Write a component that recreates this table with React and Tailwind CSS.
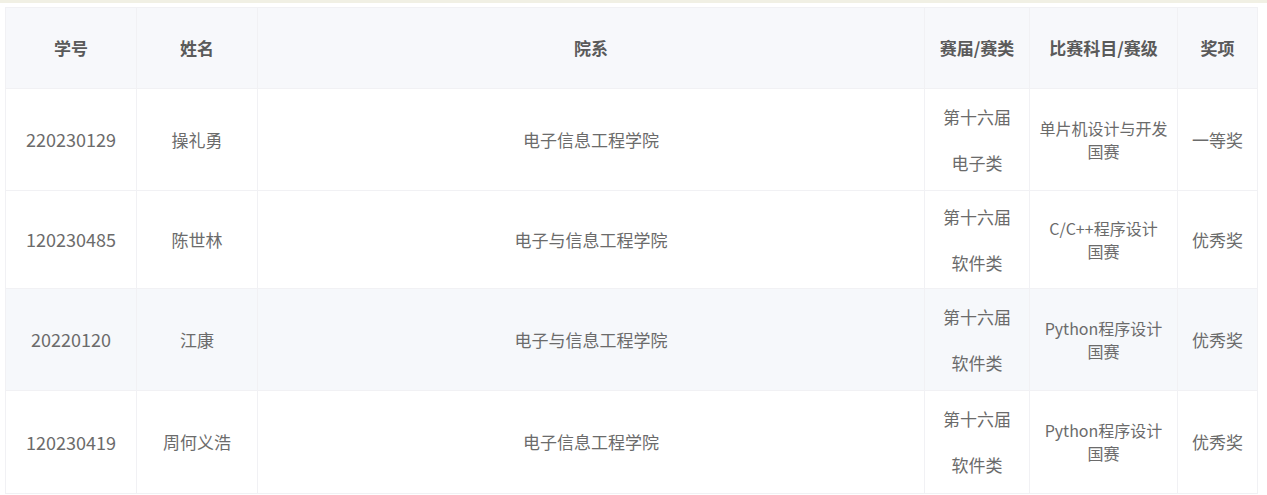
import React from "react";

const columns = [
  { key: "id", label: "学号", width: "w-[131px]" },
  { key: "name", label: "姓名", width: "w-[121px]" },
  { key: "dept", label: "院系", width: "w-[667px]" },
  { key: "session", label: "赛届/赛类", width: "w-[105px]" },
  { key: "subject", label: "比赛科目/赛级", width: "w-[148px]" },
  { key: "prize", label: "奖项", width: "w-[80px]" },
];

const rows = [
  {
    id: "220230129",
    name: "操礼勇",
    dept: "电子信息工程学院",
    session: ["第十六届", "电子类"],
    subject: ["单片机设计与开发", "国赛"],
    prize: "一等奖",
    height: "h-[102px]",
    bg: "bg-white",
  },
  {
    id: "120230485",
    name: "陈世林",
    dept: "电子与信息工程学院",
    session: ["第十六届", "软件类"],
    subject: ["C/C++程序设计", "国赛"],
    prize: "优秀奖",
    height: "h-[98px]",
    bg: "bg-white",
  },
  {
    id: "20220120",
    name: "江康",
    dept: "电子与信息工程学院",
    session: ["第十六届", "软件类"],
    subject: ["Python程序设计", "国赛"],
    prize: "优秀奖",
    height: "h-[102px]",
    bg: "bg-[#f6f8fb]",
  },
  {
    id: "120230419",
    name: "周何义浩",
    dept: "电子信息工程学院",
    session: ["第十六届", "软件类"],
    subject: ["Python程序设计", "国赛"],
    prize: "优秀奖",
    height: "h-[103px]",
    bg: "bg-white",
  },
];

const cell = "border border-[#f1f1f4] text-center align-middle px-0.5";

export default function App() {
  return (
    <div
      className="w-[1267px] h-[495px] bg-white overflow-hidden"
      style={{ fontFamily: '"Noto Sans CJK SC", "Noto Sans", sans-serif' }}
    >
      {/* faint strip above the table */}
      <div className="h-[3px] bg-[#f1f0e4]" />
      <div className="pt-[4px] pl-[5px]">
        <table className="table-fixed border-collapse w-[1253px]">
          <colgroup>
            {columns.map((c) => (
              <col key={c.key} className={c.width} />
            ))}
          </colgroup>
          <thead>
            <tr className="h-[81px] bg-[#f7f8fb]">
              {columns.map((c) => (
                <th
                  key={c.key}
                  className={`${cell} text-[17px] font-bold text-[#5a5a5a]`}
                >
                  {c.label}
                </th>
              ))}
            </tr>
          </thead>
          <tbody className="text-[17px] text-[#6b6b6b]">
            {rows.map((r) => (
              <tr key={r.id} className={`${r.height} ${r.bg}`}>
                <td className={`${cell} text-[18px]`}>{r.id}</td>
                <td className={cell}>{r.name}</td>
                <td className={cell}>{r.dept}</td>
                <td className={`${cell} leading-[46px]`}>
                  {r.session.map((s) => (
                    <div key={s}>{s}</div>
                  ))}
                </td>
                <td className={`${cell} text-[16px] leading-[23px]`}>
                  {r.subject.map((s) => (
                    <div key={s}>{s}</div>
                  ))}
                </td>
                <td className={cell}>{r.prize}</td>
              </tr>
            ))}
          </tbody>
        </table>
      </div>
    </div>
  );
}
